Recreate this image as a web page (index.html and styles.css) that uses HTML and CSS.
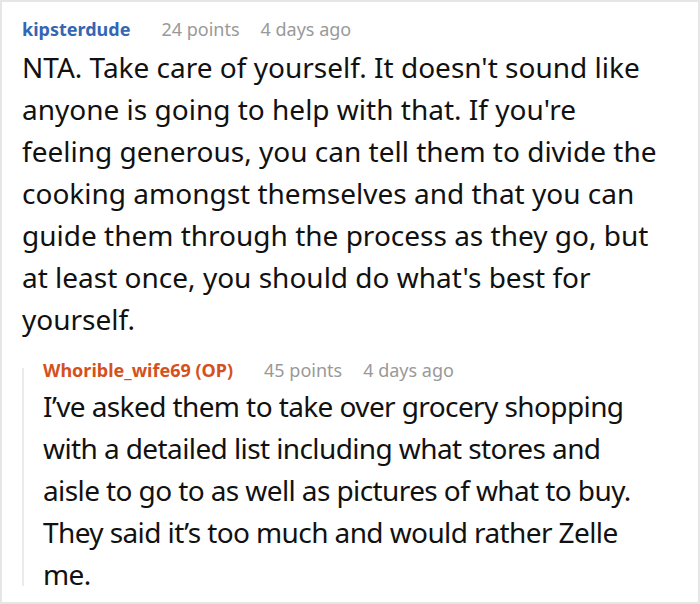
FILE: index.html
```html
<!DOCTYPE html>
<html>
<head>
<meta charset="utf-8">
<link rel="stylesheet" href="styles.css">
</head>
<body>
<div class="frame">
  <div class="comment">
    <div class="meta">
      <span class="user user-blue">kipsterdude</span>
      <span class="info">24 points</span>
      <span class="info">4 days ago</span>
    </div>
    <p class="text">NTA. Take care of yourself. It doesn't sound like anyone is going to help with that. If you're feeling generous, you can tell them to divide the cooking amongst themselves and that you can guide them through the process as they go, but at least once, you should do what's best for yourself.</p>
  </div>
  <div class="reply">
    <div class="meta meta-reply">
      <span class="user user-op">Whorible_wife69 (OP)</span>
      <span class="info">45 points</span>
      <span class="info">4 days ago</span>
    </div>
    <p class="text text-reply">I’ve asked them to take over grocery shopping with a detailed list including what stores and aisle to go to as well as pictures of what to buy. They said it’s too much and would rather Zelle me.</p>
  </div>
</div>
</body>
</html>
```
FILE: styles.css
```css
html, body {
  margin: 0;
  padding: 0;
  background: #fff;
}
.frame {
  width: 700px;
  height: 604px;
  box-sizing: border-box;
  border: 2px solid #e6e6e6;
  padding: 15px 38px 0 20px;
  font-family: "Noto Sans", "Open Sans", sans-serif;
  overflow: hidden;
}
.meta {
  display: flex;
  align-items: baseline;
  font-size: 18px;
  line-height: 24px;
  margin-bottom: 5px;
}
.meta-reply {
  margin-bottom: 3px;
}
.user {
  font-weight: 700;
  margin-right: 31px;
}
.info {
  color: #999;
  margin-right: 21px;
}
.user-blue { color: #3466b3; }
.user-op { color: #d4511e; }
.text {
  margin: 0;
  font-size: 28px;
  line-height: 42px;
  color: #111;
}
.text-reply {
  letter-spacing: -0.6px;
}
.reply {
  position: relative;
  margin-top: 18px;
  padding-left: 21px;
}
.reply::before {
  content: "";
  position: absolute;
  left: 0;
  top: 10px;
  bottom: 9px;
  width: 2px;
  background: #ebebeb;
}
```
